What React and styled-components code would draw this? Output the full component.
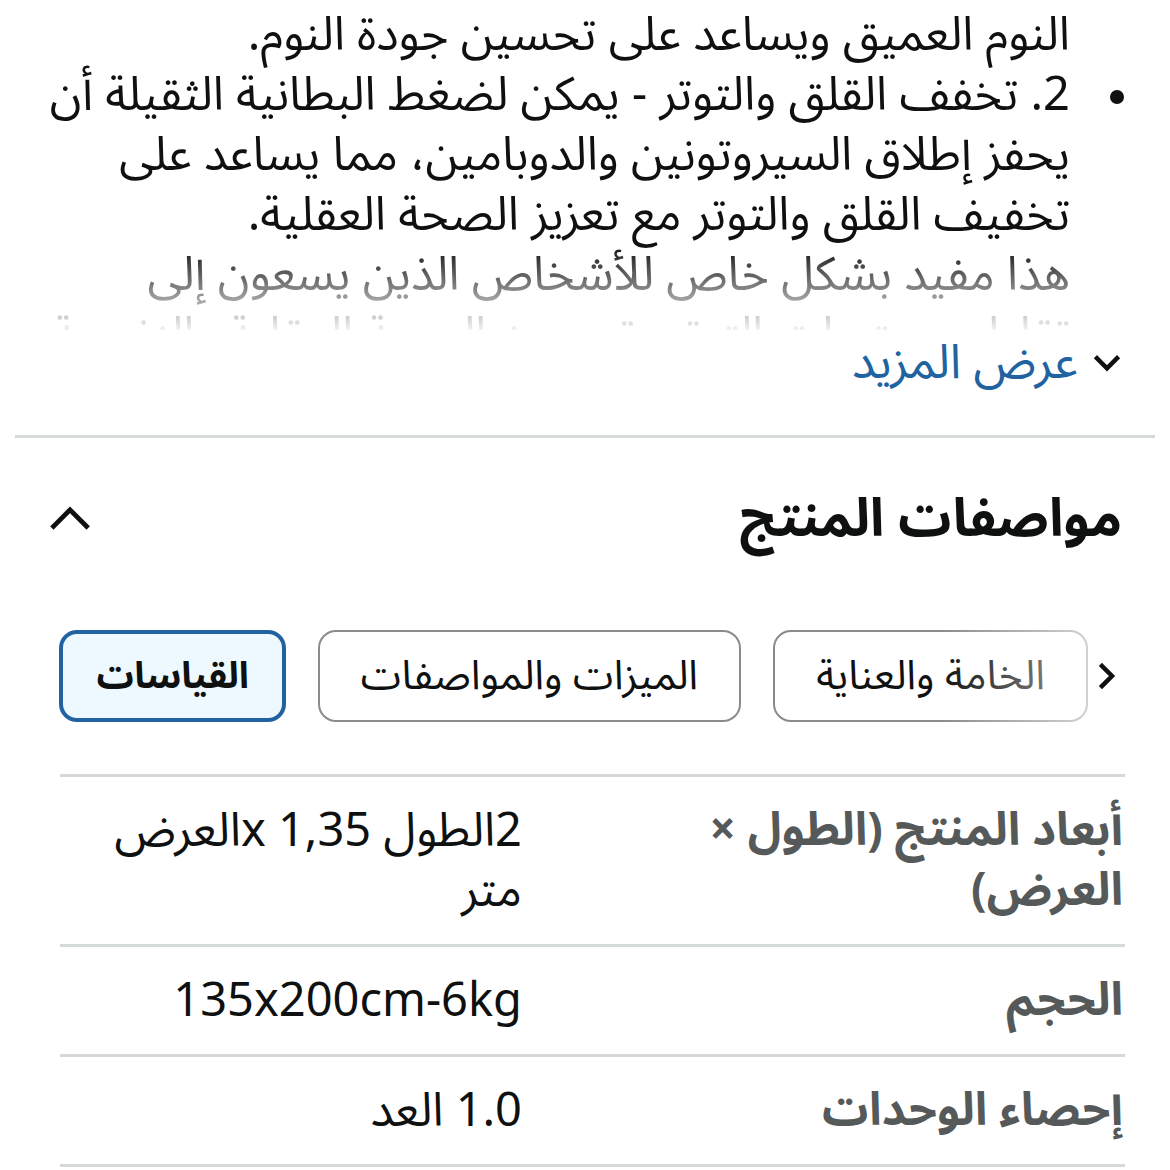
import React from 'react';
import styled, { createGlobalStyle, css } from 'styled-components';

const Global = createGlobalStyle`
  html, body { margin: 0; padding: 0; background: #fff; }
  body {
    font-family: "Noto Sans Arabic", "Noto Sans", "DejaVu Sans", sans-serif;
    color: #0f1111;
    -webkit-font-smoothing: antialiased;
  }
`;

const Page = styled.div`
  width: 1170px;
  height: 1170px;
  overflow: hidden;
  direction: rtl;
  box-sizing: border-box;
`;

const DescViewport = styled.div`
  height: 330px;
  overflow: hidden;
  -webkit-mask-image: linear-gradient(to bottom, #000 0, #000 245px, rgba(0,0,0,0) 335px);
  mask-image: linear-gradient(to bottom, #000 0, #000 245px, rgba(0,0,0,0) 335px);
`;

const BulletList = styled.ul`
  margin: 0;
  padding: 5px 100px 0 10px;
  list-style: none;
  font-size: 47px;
  line-height: 60px;
  white-space: nowrap;
`;

const Item = styled.li`
  position: relative;
  ${p => p.$bullet && css`
    &::before {
      content: '';
      position: absolute;
      right: -54px;
      top: 25px;
      width: 14px;
      height: 14px;
      border-radius: 50%;
      background: #0f1111;
    }
  `}
`;

const ShowMore = styled.a`
  display: flex;
  align-items: center;
  gap: 14px;
  height: 64px;
  padding-right: 48px;
  color: #2162a1;
  font-size: 48px;
  text-decoration: none;
  cursor: pointer;
`;

const Divider = styled.hr`
  margin: 41px 15px 0;
  border: 0;
  height: 3px;
  background: #d5d9d9;
`;

const HeaderRow = styled.div`
  display: flex;
  align-items: center;
  justify-content: space-between;
  margin-top: 50px;
  padding: 0 48px 0 48px;
  height: 62px;
`;

const Title = styled.h2`
  margin: 0;
  font-size: 53px;
  font-weight: 700;
  line-height: 62px;
  color: #0f1111;
`;

const TabsBar = styled.div`
  position: relative;
  margin-top: 80px;
  height: 92px;
`;

const TabsTrack = styled.div`
  display: flex;
  gap: 32px;
  padding-right: 82px;
  height: 92px;
`;

const Tab = styled.button`
  box-sizing: border-box;
  height: 92px;
  padding: 0 41px;
  border-radius: 18px;
  font-family: inherit;
  font-size: 41px;
  color: #0f1111;
  white-space: nowrap;
  background: #fff;
  border: 2px solid #888c8c;
  font-weight: 400;
  ${p => p.$active && css`
    border: 4px solid #2162a1;
    background: #edf8ff;
    font-weight: 700;
    font-size: 37px;
    padding: 0 33px;
  `}
`;

const TabsFade = styled.div`
  position: absolute;
  top: -4px;
  bottom: -4px;
  right: 0;
  width: 230px;
  background: linear-gradient(to left, #fff 0, #fff 64px, rgba(255,255,255,0.6) 82px, rgba(255,255,255,0) 230px);
  pointer-events: none;
`;

const ScrollArrow = styled.button`
  position: absolute;
  right: 48px;
  top: 50%;
  transform: translateY(-50%);
  width: 30px;
  height: 50px;
  padding: 0;
  border: 0;
  background: transparent;
  display: flex;
  align-items: center;
  justify-content: center;
`;

const Table = styled.div`
  margin: 52px 45px 0 60px;
  border-bottom: 3px solid #d5d9d9;
`;

const Row = styled.div`
  display: grid;
  grid-template-columns: 1fr 462px;
  border-top: 3px solid #d5d9d9;
  padding: 24px 0 23px;
  line-height: 60px;
  white-space: nowrap;
`;

const Label = styled.div`
  font-size: 46px;
  font-weight: 700;
  color: #565959;
  padding-right: 2px;
`;

const Value = styled.div`
  font-size: 47px;
  color: #0f1111;
`;

const Chevron = ({ dir = 'down', size = 28, stroke = 5 }) => {
  const paths = {
    down: 'M4 9l8 8 8-8',
    up: 'M3 16l9-9 9 9',
    right: 'M8 4l8 8-8 8',
  };
  return (
    <svg width={size} height={size} viewBox="0 0 24 24" fill="none" stroke="#0f1111" strokeWidth={stroke} strokeLinecap="square" strokeLinejoin="miter">
      <path d={paths[dir]} />
    </svg>
  );
};

export default function App() {
  return (
    <Page>
      <Global />
      <DescViewport>
        <BulletList>
          <Item>النوم العميق ويساعد على تحسين جودة النوم.</Item>
          <Item $bullet>
            2. تخفف القلق والتوتر - يمكن لضغط البطانية الثقيلة أن
            <br />
            يحفز إطلاق السيروتونين والدوبامين، مما يساعد على
            <br />
            تخفيف القلق والتوتر مع تعزيز الصحة العقلية.
            <br />
            هذا مفيد بشكل خاص للأشخاص الذين يسعون إلى
            <br />
            تقليل مستويات التوتر وتحسين الصحة العقلية والنفسية.
          </Item>
        </BulletList>
      </DescViewport>
      <ShowMore>
        <Chevron dir="down" size={30} stroke={3.6} />
        <span>عرض المزيد</span>
      </ShowMore>
      <Divider />
      <HeaderRow>
        <Title>مواصفات المنتج</Title>
        <Chevron dir="up" size={44} stroke={2.6} />
      </HeaderRow>
      <TabsBar>
        <TabsTrack>
          <Tab>الخامة والعناية</Tab>
          <Tab>الميزات والمواصفات</Tab>
          <Tab $active>القياسات</Tab>
        </TabsTrack>
        <TabsFade />
        <ScrollArrow aria-label="next">
          <Chevron dir="right" size={40} stroke={3.6} />
        </ScrollArrow>
      </TabsBar>
      <Table>
        <Row>
          <Label>أبعاد المنتج (الطول ×<br />العرض)</Label>
          <Value>2الطول x 1,35العرض<br />متر</Value>
        </Row>
        <Row>
          <Label>الحجم</Label>
          <Value>135x200cm-6kg</Value>
        </Row>
        <Row>
          <Label>إحصاء الوحدات</Label>
          <Value>1.0 العد</Value>
        </Row>
      </Table>
    </Page>
  );
}
